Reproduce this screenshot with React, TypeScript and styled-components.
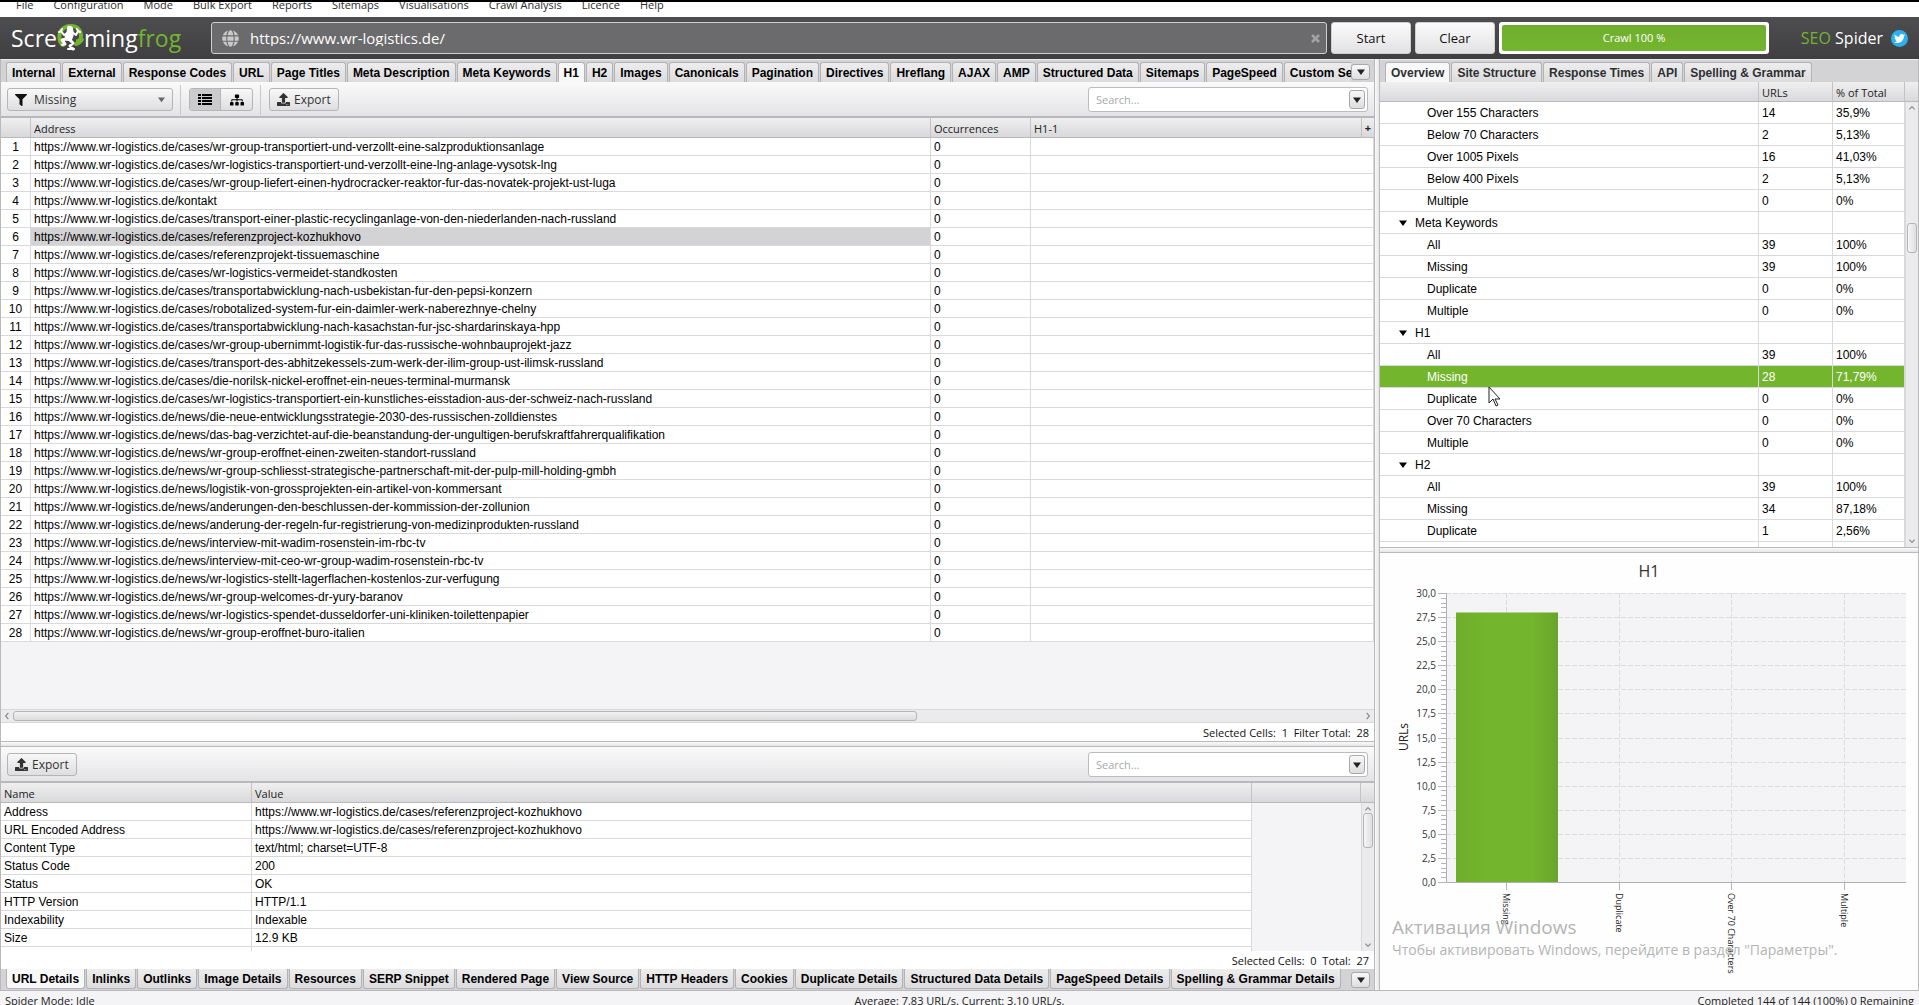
import React from "react";
import styled, { createGlobalStyle, css } from "styled-components";
import { FaFilter, FaGlobe, FaSitemap, FaTwitter, FaUpload } from "react-icons/fa";

const ui = `"Open Sans", "Noto Sans", sans-serif`;
const sans = `"Liberation Sans", Arial, sans-serif`;
const green = "#73b52d";
const line = "#b9b9bb";
const softLine = "#d9d9db";
const headFill = "linear-gradient(#efeff0, #d9d9db)";
const toolFill = "linear-gradient(#fafafb, #e4e4e6)";
const buttonFill = "linear-gradient(#f8f8f9, #dedee0)";

const Global = createGlobalStyle`
  * { box-sizing: border-box; }
  body { margin: 0; background: #f4f4f6; }
  button, input, select { font: inherit; color: inherit; margin: 0; }
`;

const Window = styled.div`
  position: relative;
  display: flex;
  flex-direction: column;
  height: 100vh;
  overflow: hidden;
  font: 12px/16px ${ui};
  color: #111;
`;

const MenuBar = styled.nav`
  flex: none;
  height: 17px;
  border-top: 2px solid #000;
  background: #fff;
  overflow: hidden;
`;

const MenuList = styled.div`
  display: flex;
  gap: 20px;
  margin-top: -5px;
  padding-left: 16px;
`;

const MenuItem = styled.button`
  padding: 0;
  border: 0;
  background: none;
  font-size: 11px;
  line-height: 16px;
  color: #2c2c2c;
`;

const Header = styled.header`
  flex: none;
  display: flex;
  align-items: center;
  height: 42px;
  padding: 0 11px 0 11px;
  background: linear-gradient(#4e4d4f, #3f3e40);
`;

const Logo = styled.div`
  display: flex;
  align-items: center;
  width: 200px;
  font: 23px/30px ${ui};
  color: #fff;
  svg { flex: none; }
`;

const Green = styled.span`
  color: ${green};
`;

const UrlBox = styled.label`
  flex: 1;
  display: flex;
  align-items: center;
  gap: 11px;
  height: 32px;
  padding: 0 6px 0 10px;
  border: 1px solid #cfcfd0;
  border-radius: 3px;
  background: #6b6a6c;
  color: #c9c9ca;
`;

const UrlInput = styled.input`
  flex: 1;
  min-width: 0;
  padding: 0;
  border: 0;
  outline: 0;
  background: none;
  font-size: 15px;
  color: #fff;
`;

const ClearUrl = styled.button`
  padding: 0;
  border: 0;
  background: none;
  line-height: 0;
`;

const HeaderButton = styled.button`
  width: 80px;
  height: 32px;
  margin-left: 4px;
  border: 1px solid #cfcfd0;
  border-radius: 3px;
  background: linear-gradient(#fbfbfb, #e2e2e4);
  font-size: 13px;
  color: #111;
`;

const Progress = styled.div`
  display: flex;
  width: 270px;
  height: 32px;
  margin-left: 4px;
  padding: 3px;
  border-radius: 3px;
  background: #fff;
`;

const ProgressFill = styled.div`
  flex: 1;
  display: grid;
  place-items: center;
  border-radius: 2px;
  background: linear-gradient(#70ad2e, #74b62f);
  font-size: 11px;
  color: #fff;
`;

const Product = styled.div`
  display: flex;
  align-items: center;
  justify-content: flex-end;
  gap: 8px;
  width: 139px;
  font-size: 16px;
  color: #fff;
`;

const Bird = styled.a`
  display: grid;
  place-items: center;
  width: 17px;
  height: 17px;
  border-radius: 50%;
  background: #2cb1ee;
  color: #fff;
`;

const Workspace = styled.main`
  flex: 1;
  min-height: 0;
  display: grid;
  grid-template-columns: minmax(0, 1375fr) 4px minmax(0, 540fr);
  border-bottom: 1px solid ${line};
`;

const Splitter = styled.div<{ $across?: boolean }>`
  flex: none;
  background: linear-gradient(${(p) => (p.$across ? "180deg" : "90deg")}, #fafafa, #e6e6e8);
  ${(p) => p.$across && css`height: 6px; border: solid ${line}; border-width: 1px 0;`}
`;

const Column = styled.div`
  display: flex;
  flex-direction: column;
  min-width: 0;
  min-height: 0;
  border: solid ${line};
  border-width: 0 1px;
  background: #fff;
`;

const TabStrip = styled.div<{ $bottom?: boolean }>`
  flex: none;
  display: flex;
  align-items: ${(p) => (p.$bottom ? "flex-start" : "flex-end")};
  height: ${(p) => (p.$bottom ? 21 : 23)}px;
  padding: 0 4px 0 5px;
  background: #d3d2d4;
  ${(p) => (p.$bottom ? "" : "border-top: 1px solid #ececec; padding-top: 2px;")}
`;

const TabList = styled.div`
  flex: 1;
  min-width: 0;
  display: flex;
  gap: 1px;
  overflow: hidden;
`;

const Tab = styled.button<{ $active?: boolean; $bottom?: boolean; $muted?: boolean }>`
  flex: none;
  height: 20px;
  padding: 0 5px;
  border: 1px solid #b3b3b5;
  ${(p) => (p.$bottom ? "border-top: 0; border-radius: 0 0 3px 3px;" : "border-bottom: 0; border-radius: 3px 3px 0 0;")}
  background: ${(p) => (p.$active ? "#f8f8f9" : "linear-gradient(#ededee, #dcdcde)")};
  font: bold 12px/18px ${sans};
  color: ${(p) => (p.$muted ? "#2f2f31" : "#000")};
`;

const ArrowButton = styled.button`
  flex: none;
  display: grid;
  place-items: center;
  width: 16px;
  height: 19px;
  padding: 0;
  border: 1px solid #a9a9ab;
  border-radius: 3px;
  background: ${buttonFill};
`;

const TabMenu = styled(ArrowButton)`
  width: 19px;
  height: 16px;
  align-self: center;
`;

const Toolbar = styled.div`
  flex: none;
  display: flex;
  align-items: center;
  height: 36px;
  padding: 1px 6px 0 6px;
  border-bottom: 2px solid ${line};
  background: ${toolFill};
  color: #333;
`;

const controlBox = css`
  display: flex;
  align-items: center;
  height: 23px;
  border: 1px solid #b5b5b7;
  border-radius: 3px;
  background: ${buttonFill};
`;

const FilterBox = styled.label`
  ${controlBox}
  width: 166px;
  padding: 0 7px;
  gap: 7px;
  svg { flex: none; color: #111; }
`;

const FilterSelect = styled.select`
  flex: 1;
  min-width: 0;
  padding: 0;
  border: 0;
  outline: 0;
  appearance: none;
  background: none;
`;

const Divider = styled.span`
  width: 1px;
  height: 30px;
  margin: 0 8px 0 7px;
  background: #c9c9cb;
`;

const ViewGroup = styled.div`
  ${controlBox}
  overflow: hidden;
`;

const ViewButton = styled.button<{ $on?: boolean }>`
  display: grid;
  place-items: center;
  width: 31px;
  height: 21px;
  padding: 0;
  border: 0;
  ${(p) => p.$on && "border-right: 1px solid #b5b5b7;"}
  background: ${(p) => (p.$on ? "#cbcbcd" : "none")};
  color: #000;
`;

const ExportButton = styled.button`
  ${controlBox}
  gap: 4px;
  width: 70px;
  padding: 0 7px;
  svg { flex: none; }
`;

const SearchBox = styled.div`
  display: flex;
  align-items: center;
  width: 280px;
  height: 25px;
  margin-left: auto;
  padding: 0 2px 0 7px;
  border: 1px solid #bcbcbe;
  border-radius: 3px;
  background: #fff;
`;

const SearchInput = styled.input`
  flex: 1;
  min-width: 0;
  padding: 0;
  border: 0;
  outline: 0;
  background: none;
  font-size: 11px;
  &::placeholder { color: #a8a8aa; opacity: 1; }
`;

const Pane = styled.div<{ $height?: number }>`
  display: flex;
  min-height: 0;
  flex: ${(p) => (p.$height ? `0 0 ${p.$height}px` : "1")};
  overflow: hidden;
  background: #f4f4f6;
`;

const PaneBody = styled.div`
  flex: 1;
  min-width: 0;
  overflow: hidden;
`;

const Table = styled.table<{ $row?: number }>`
  width: 100%;
  table-layout: fixed;
  border-collapse: separate;
  border-spacing: 0;
  th {
    height: 20px;
    padding: 2px 3px 0;
    border-right: 1px solid #c3c3c5;
    border-bottom: 1px solid ${line};
    background: ${headFill};
    font-size: 11px;
    font-weight: normal;
    line-height: 17px;
    text-align: left;
    color: #222;
  }
  td {
    height: ${(p) => p.$row ?? 18}px;
    padding: 2px 3px 0;
    border-right: 1px solid ${softLine};
    border-bottom: 1px solid ${softLine};
    background: #fff;
    font: 12px/${(p) => (p.$row ?? 18) - 3}px ${sans};
    color: #000;
    white-space: nowrap;
    overflow: hidden;
  }
`;

const NumberCell = styled.td`
  && { padding-left: 0; padding-right: 0; text-align: center; }
`;

const UrlCell = styled.td<{ $on?: boolean }>`
  && { background: ${(p) => (p.$on ? "#d3d2d4" : "#fff")}; }
`;

const AddHead = styled.th`
  && { padding: 0; text-align: center; font-weight: bold; border-right: 0; }
`;

const TreeRow = styled.tr<{ $on?: boolean }>`
  ${(p) => p.$on && css`&& td { background: ${green}; color: #fff; }`}
`;

const TreeCell = styled.td<{ $group?: boolean }>`
  && { padding-left: ${(p) => (p.$group ? 19 : 47)}px; }
  svg { margin-right: 8px; vertical-align: 1px; }
`;

const EmptyCell = styled.td`
  && { background: #f4f4f6; border-color: transparent; }
`;

const VSide = styled.div`
  flex: none;
  display: flex;
  flex-direction: column;
`;

const VHead = styled.div`
  height: 20px;
  border-bottom: 1px solid ${line};
  background: ${headFill};
`;

const VTrack = styled.div`
  flex: 1;
  display: flex;
  flex-direction: column;
  align-items: center;
  width: 13px;
  padding: 2px 0;
  border-left: 1px solid ${softLine};
  background: #ebebed;
`;

const VThumb = styled.div<{ $size: number }>`
  width: 10px;
  height: ${(p) => p.$size}px;
  border: 1px solid #b5b5b7;
  border-radius: 3px;
  background: linear-gradient(90deg, #f6f6f7, #dedee0);
`;

const Gap = styled.div<{ $grow: number }>`
  flex: ${(p) => p.$grow} 1 0;
`;

const HTrack = styled.div`
  flex: none;
  display: flex;
  align-items: center;
  justify-content: space-between;
  gap: 2px;
  height: 14px;
  padding: 0 2px;
  border: solid ${softLine};
  border-width: 1px 0;
  background: #ebebed;
`;

const HThumb = styled.div`
  width: 66%;
  height: 10px;
  margin-right: auto;
  border: 1px solid #b5b5b7;
  border-radius: 3px;
  background: linear-gradient(#f2f2f3, #dcdcde);
`;

const Summary = styled.div`
  flex: none;
  height: 18px;
  padding: 1px 5px 0 0;
  font-size: 11px;
  line-height: 17px;
  text-align: right;
  white-space: pre;
`;

const ChartPane = styled.div`
  position: relative;
  flex: none;
  height: 437px;
  background: #fefefe;
  svg { display: block; width: 100%; height: 100%; }
`;

const Watermark = styled.div`
  position: absolute;
  left: 12px;
  top: 361px;
  color: #b4b4b4;
  font-size: 14px;
  line-height: 20px;
  white-space: nowrap;
`;

const WatermarkTitle = styled.div`
  font-size: 19px;
  line-height: 26px;
`;

const Pointer = styled.svg`
  position: absolute;
  left: 1488px;
  top: 386px;
`;

const StatusBar = styled.footer`
  flex: none;
  display: grid;
  grid-template-columns: 1fr auto 1fr;
  height: 14px;
  padding: 1px 5px 0;
  overflow: hidden;
  background: #f4f4f6;
  font-size: 11px;
  line-height: 17px;
  color: #222;
`;

const StatusEnd = styled.span`
  text-align: right;
`;

const menus = ["File", "Configuration", "Mode", "Bulk Export", "Reports", "Sitemaps", "Visualisations", "Crawl Analysis", "Licence", "Help"];
const mainTabs = ["Internal", "External", "Response Codes", "URL", "Page Titles", "Meta Description", "Meta Keywords", "H1", "H2", "Images", "Canonicals", "Pagination", "Directives", "Hreflang", "AJAX", "AMP", "Structured Data", "Sitemaps", "PageSpeed", "Custom Search"];
const detailTabs = ["URL Details", "Inlinks", "Outlinks", "Image Details", "Resources", "SERP Snippet", "Rendered Page", "View Source", "HTTP Headers", "Cookies", "Duplicate Details", "Structured Data Details", "PageSpeed Details", "Spelling & Grammar Details"];
const sideTabs = ["Overview", "Site Structure", "Response Times", "API", "Spelling & Grammar"];

const site = "https://www.wr-logistics.de/";
const pages = [
  "cases/wr-group-transportiert-und-verzollt-eine-salzproduktionsanlage",
  "cases/wr-logistics-transportiert-und-verzollt-eine-lng-anlage-vysotsk-lng",
  "cases/wr-group-liefert-einen-hydrocracker-reaktor-fur-das-novatek-projekt-ust-luga",
  "kontakt",
  "cases/transport-einer-plastic-recyclinganlage-von-den-niederlanden-nach-russland",
  "cases/referenzproject-kozhukhovo",
  "cases/referenzprojekt-tissuemaschine",
  "cases/wr-logistics-vermeidet-standkosten",
  "cases/transportabwicklung-nach-usbekistan-fur-den-pepsi-konzern",
  "cases/robotalized-system-fur-ein-daimler-werk-naberezhnye-chelny",
  "cases/transportabwicklung-nach-kasachstan-fur-jsc-shardarinskaya-hpp",
  "cases/wr-group-ubernimmt-logistik-fur-das-russische-wohnbauprojekt-jazz",
  "cases/transport-des-abhitzekessels-zum-werk-der-ilim-group-ust-ilimsk-russland",
  "cases/die-norilsk-nickel-eroffnet-ein-neues-terminal-murmansk",
  "cases/wr-logistics-transportiert-ein-kunstliches-eisstadion-aus-der-schweiz-nach-russland",
  "news/die-neue-entwicklungsstrategie-2030-des-russischen-zolldienstes",
  "news/das-bag-verzichtet-auf-die-beanstandung-der-ungultigen-berufskraftfahrerqualifikation",
  "news/wr-group-eroffnet-einen-zweiten-standort-russland",
  "news/wr-group-schliesst-strategische-partnerschaft-mit-der-pulp-mill-holding-gmbh",
  "news/logistik-von-grossprojekten-ein-artikel-von-kommersant",
  "news/anderungen-den-beschlussen-der-kommission-der-zollunion",
  "news/anderung-der-regeln-fur-registrierung-von-medizinprodukten-russland",
  "news/interview-mit-wadim-rosenstein-im-rbc-tv",
  "news/interview-mit-ceo-wr-group-wadim-rosenstein-rbc-tv",
  "news/wr-logistics-stellt-lagerflachen-kostenlos-zur-verfugung",
  "news/wr-group-welcomes-dr-yury-baranov",
  "news/wr-logistics-spendet-dusseldorfer-uni-kliniken-toilettenpapier",
  "news/wr-group-eroffnet-buro-italien",
];

const details: [string, string][] = [
  ["Address", site + pages[5]],
  ["URL Encoded Address", site + pages[5]],
  ["Content Type", "text/html; charset=UTF-8"],
  ["Status Code", "200"],
  ["Status", "OK"],
  ["HTTP Version", "HTTP/1.1"],
  ["Indexability", "Indexable"],
  ["Size", "12.9 KB"],
  ["", ""],
];

type Node = { name: string; urls?: string; share?: string; on?: boolean };
const tree: Node[] = [
  { name: "Over 155 Characters", urls: "14", share: "35,9%" },
  { name: "Below 70 Characters", urls: "2", share: "5,13%" },
  { name: "Over 1005 Pixels", urls: "16", share: "41,03%" },
  { name: "Below 400 Pixels", urls: "2", share: "5,13%" },
  { name: "Multiple", urls: "0", share: "0%" },
  { name: "Meta Keywords" },
  { name: "All", urls: "39", share: "100%" },
  { name: "Missing", urls: "39", share: "100%" },
  { name: "Duplicate", urls: "0", share: "0%" },
  { name: "Multiple", urls: "0", share: "0%" },
  { name: "H1" },
  { name: "All", urls: "39", share: "100%" },
  { name: "Missing", urls: "28", share: "71,79%", on: true },
  { name: "Duplicate", urls: "0", share: "0%" },
  { name: "Over 70 Characters", urls: "0", share: "0%" },
  { name: "Multiple", urls: "0", share: "0%" },
  { name: "H2" },
  { name: "All", urls: "39", share: "100%" },
  { name: "Missing", urls: "34", share: "87,18%" },
  { name: "Duplicate", urls: "1", share: "2,56%" },
  { name: "", urls: "", share: "" },
];

const Caret = ({ size = 8, color = "#222" }: { size?: number; color?: string }) => (
  <svg width={size} height={size * 0.75} viewBox="0 0 8 6" fill={color} aria-hidden="true">
    <path d="M0 0.5h8L4 6z" />
  </svg>
);

const chevrons = { up: "M1 6l3-3 3 3", down: "M1 3l3 3 3-3", left: "M5.500 1l-3 3.500 3 3.500", right: "M2.500 1l3 3.500-3 3.500" };
const Chevron = ({ to }: { to: keyof typeof chevrons }) => (
  <svg width="8" height="8" viewBox="0 0 8 9" fill="none" stroke="#8a8a8c" strokeWidth="1.300" aria-hidden="true">
    <path d={chevrons[to]} />
  </svg>
);

const ListIcon = () => (
  <svg width="14" height="11" viewBox="0 0 14 11" fill="#000" aria-hidden="true">
    <path d="M0 0h3v2H0zM4 0h10v2H4zM0 3h3v2H0zM4 3h10v2H4zM0 6h3v2H0zM4 6h10v2H4zM0 9h3v2H0zM4 9h10v2H4z" />
  </svg>
);

const Frog = () => (
  <svg width="27" height="30" viewBox="0 0 27 30" aria-hidden="true">
    <path
      d="M6 22C2 19 2 14 3 10 5 5 9 3 14 3c7 0 10 5 10 9 0 6-2 9-5 9"
      fill="none"
      stroke={green}
      strokeWidth="4"
      strokeLinecap="round"
    />
    <path d="M19 19c3 0 5-1 6-4" fill="none" stroke={green} strokeWidth="5" />
    <path d="M11 3l4 1 1 4 0 5-2 5-5-1-1-4 2-4z" fill="#fff" stroke="#fff" strokeWidth="1" strokeLinejoin="round" />
    <g fill="none" stroke="#fff" strokeLinecap="round" strokeLinejoin="round">
      <path d="M10 10L7 12 4 8M4 8L2 9M4 8L5 6M15 9l4 3 2-4M21 8l-1-2M21 8l2 1" strokeWidth="2" />
      <path d="M9 16L5 17 8 21M13 17l3 3-3 3 3 3" strokeWidth="3" />
      <path d="M17 26h-6M8 21l-3 1" strokeWidth="2" />
    </g>
  </svg>
);

const Search = ({ id }: { id: string }) => (
  <SearchBox>
    <SearchInput id={id} type="text" placeholder="Search..." aria-label="Search" />
    <ArrowButton aria-label="Search options"><Caret /></ArrowButton>
  </SearchBox>
);

const Export = () => (
  <ExportButton><FaUpload size={13} />Export</ExportButton>
);

const Tabs = ({ names, active, bottom, muted, menu }: { names: string[]; active: string; bottom?: boolean; muted?: boolean; menu?: boolean }) => (
  <TabStrip $bottom={bottom}>
    <TabList role="tablist">
      {names.map((name) => (
        <Tab key={name} role="tab" aria-selected={name === active} $active={name === active} $bottom={bottom} $muted={muted}>
          {name}
        </Tab>
      ))}
    </TabList>
    {menu && <TabMenu aria-label="More tabs"><Caret /></TabMenu>}
  </TabStrip>
);

const Scroller = ({ before, size, after }: { before: number; size: number; after: number }) => (
  <VSide>
    <VHead />
    <VTrack>
      <Chevron to="up" />
      <Gap $grow={before} />
      <VThumb $size={size} />
      <Gap $grow={after} />
      <Chevron to="down" />
    </VTrack>
  </VSide>
);

const plot = { left: 66, right: 526, top: 40, bottom: 329 };
const categories = ["Missing", "Duplicate", "Over 70 Characters", "Multiple"];
const yOf = (value: number) => Math.round(plot.bottom - (value / 30) * (plot.bottom - plot.top)) + 0.5;

const Chart = () => (
  <svg viewBox="0 0 538 437" fontFamily={ui} role="img" aria-label="H1">
    <defs>
      <linearGradient id="bar">
        <stop offset="0" stopColor="#6fae2b" />
        <stop offset="0.300" stopColor="#73b52d" />
        <stop offset="0.750" stopColor="#73b52d" />
        <stop offset="1" stopColor="#69a429" />
      </linearGradient>
    </defs>
    <text x="269" y="24" fontSize="16" textAnchor="middle" fill="#333">H1</text>
    <rect x={plot.left} y={plot.top} width={plot.right - plot.left} height={plot.bottom - plot.top} fill="#f4f4f6" />
    {Array.from({ length: 61 }, (_, i) => i / 2).map((v) => {
      const major = v % 2.5 === 0;
      return (
        <g key={v}>
          <path d={`M${major ? 58 : 61} ${yOf(v)}H66`} stroke="#b5b5b7" />
          {major && <path d={`M66 ${yOf(v)}H526`} stroke="#dcdcde" strokeDasharray="5 2" />}
          {major && (
            <text x="56" y={yOf(v) + 3.5} fontSize="10" textAnchor="end" fill="#333">{v.toFixed(1).replace(".", ",")}</text>
          )}
        </g>
      );
    })}
    {categories.map((name, i) => {
      const x = 126.5 + Math.round(i * 112.5);
      return (
        <g key={name}>
          <path d={`M${x} 40V329`} stroke="#dcdcde" strokeDasharray="5 2" />
          <path d={`M${x} 329V337`} stroke="#b5b5b7" />
          <text transform={`translate(${x - 4} 340) rotate(90)`} fontSize="9" fill="#222">{name}</text>
        </g>
      );
    })}
    <rect x="76" y={yOf(28)} width="102" height={329 - yOf(28)} fill="url(#bar)" />
    <path d="M66.500 40V329.500H526" fill="none" stroke="#b0b0b2" />
    <text transform="translate(28 184) rotate(-90)" fontSize="12" textAnchor="middle" fill="#222">URLs</text>
  </svg>
);

export default function App() {
  return (
    <Window>
      <Global />
      <MenuBar>
        <MenuList>
          {menus.map((name) => <MenuItem key={name}>{name}</MenuItem>)}
        </MenuList>
      </MenuBar>
      <Header>
        <Logo><span>Scre</span><Frog /><span>ming</span><Green>frog</Green></Logo>
        <UrlBox>
          <FaGlobe size={17} />
          <UrlInput type="text" defaultValue={site} aria-label="URL to crawl" />
          <ClearUrl aria-label="Clear URL">
            <svg width="9" height="9" viewBox="0 0 9 9" stroke="#a3a3a5" strokeWidth="2.500"><path d="M1 1l7 7M8 1L1 8" /></svg>
          </ClearUrl>
        </UrlBox>
        <HeaderButton>Start</HeaderButton>
        <HeaderButton>Clear</HeaderButton>
        <Progress><ProgressFill>Crawl 100 %</ProgressFill></Progress>
        <Product>
          <span><Green>SEO</Green> Spider</span>
          <Bird href="#twitter" aria-label="Twitter"><FaTwitter size={11} /></Bird>
        </Product>
      </Header>
      <Workspace>
        <Column>
          <Tabs names={mainTabs} active="H1" menu />
          <Toolbar>
            <FilterBox>
              <FaFilter size={12} />
              <FilterSelect aria-label="Filter" defaultValue="Missing">
                <option>Missing</option>
              </FilterSelect>
              <Caret size={7} color="#666" />
            </FilterBox>
            <Divider />
            <ViewGroup>
              <ViewButton $on aria-label="List view"><ListIcon /></ViewButton>
              <ViewButton aria-label="Tree view"><FaSitemap size={14} /></ViewButton>
            </ViewGroup>
            <Divider />
            <Export />
            <Search id="page-search" />
          </Toolbar>
          <Pane>
            <PaneBody>
              <Table>
                <colgroup><col width="30" /><col /><col width="100" /><col width="331" /><col width="12" /></colgroup>
                <thead>
                  <tr><th /><th>Address</th><th>Occurrences</th><th>H1-1</th><AddHead>+</AddHead></tr>
                </thead>
                <tbody>
                  {pages.map((page, i) => (
                    <tr key={page}>
                      <NumberCell>{i + 1}</NumberCell>
                      <UrlCell $on={i === 5}>{site + page}</UrlCell>
                      <td>0</td>
                      <td colSpan={2} />
                    </tr>
                  ))}
                </tbody>
              </Table>
            </PaneBody>
          </Pane>
          <HTrack><Chevron to="left" /><HThumb /><Chevron to="right" /></HTrack>
          <Summary>Selected Cells:  1  Filter Total:  28</Summary>
          <Splitter $across />
          <Toolbar>
            <Export />
            <Search id="detail-search" />
          </Toolbar>
          <Pane $height={168}>
            <PaneBody>
              <Table>
                <colgroup><col width="251" /><col /><col width="109" /></colgroup>
                <thead>
                  <tr><th>Name</th><th>Value</th><th /></tr>
                </thead>
                <tbody>
                  {details.map(([name, value]) => (
                    <tr key={name}><td>{name}</td><td>{value}</td><EmptyCell /></tr>
                  ))}
                </tbody>
              </Table>
            </PaneBody>
            <Scroller before={0} size={35} after={1} />
          </Pane>
          <Summary>Selected Cells:  0  Total:  27</Summary>
          <Tabs names={detailTabs} active="URL Details" bottom menu />
        </Column>
        <Splitter />
        <Column>
          <Tabs names={sideTabs} active="Overview" muted />
          <Pane>
            <PaneBody>
              <Table $row={22}>
                <colgroup><col /><col width="74" /><col width="72" /></colgroup>
                <thead>
                  <tr><th /><th>URLs</th><th>% of Total</th></tr>
                </thead>
                <tbody>
                  {tree.map((node, i) => {
                    const group = node.urls === undefined;
                    return (
                      <TreeRow key={i} $on={node.on}>
                        <TreeCell $group={group}>{group && <Caret color="#000" />}{node.name}</TreeCell>
                        <td>{node.urls}</td>
                        <td>{node.share}</td>
                      </TreeRow>
                    );
                  })}
                </tbody>
              </Table>
            </PaneBody>
            <Scroller before={112} size={30} after={285} />
          </Pane>
          <Splitter $across />
          <ChartPane>
            <Chart />
            <Watermark>
              <WatermarkTitle>Активация Windows</WatermarkTitle>
              Чтобы активировать Windows, перейдите в раздел "Параметры".
            </Watermark>
          </ChartPane>
        </Column>
      </Workspace>
      <StatusBar>
        <span>Spider Mode: Idle</span>
        <span>Average: 7.83 URL/s. Current: 3.10 URL/s.</span>
        <StatusEnd>Completed 144 of 144 (100%) 0 Remaining</StatusEnd>
      </StatusBar>
      <Pointer width="13" height="21" viewBox="0 0 13 21" aria-hidden="true">
        <path d="M1 1v16l4-4 3 7 2-1-3-6h5z" fill="#fff" stroke="#222" />
      </Pointer>
    </Window>
  );
}
